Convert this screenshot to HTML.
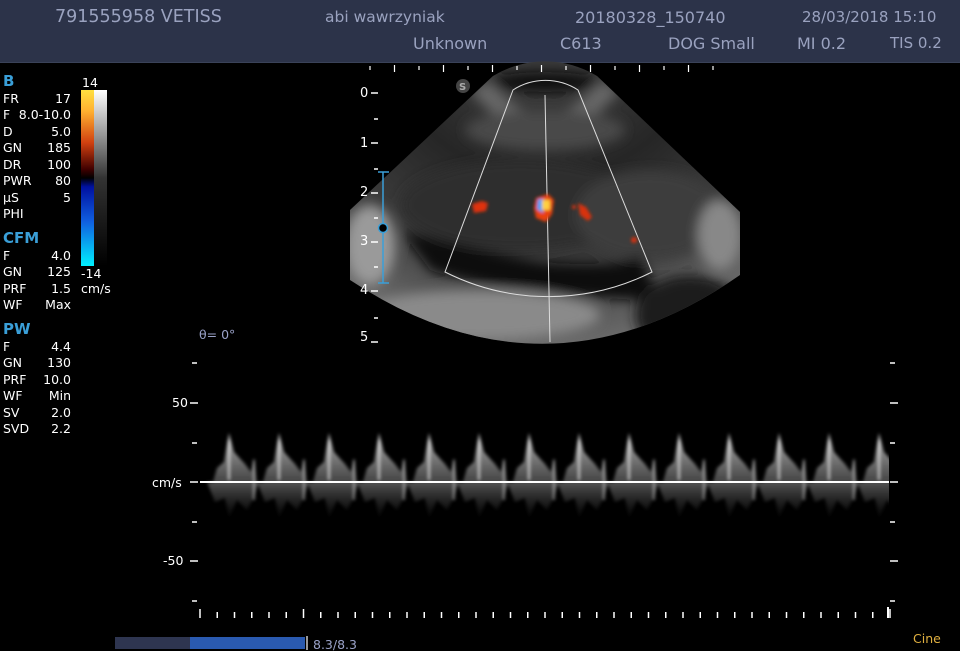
<!DOCTYPE html>
<html><head><meta charset="utf-8"><style>
*{margin:0;padding:0}
body{width:960px;height:651px;background:#000;overflow:hidden;position:relative;font-family:"DejaVu Sans","Liberation Sans",sans-serif;color:#fff}
.hdr{position:absolute;left:0;top:0;width:960px;height:62px;background:#2c3349;border-bottom:1px solid #3a4258}
.h{position:absolute;font-size:16px;color:#9aa2bf;white-space:nowrap}
.t{position:absolute;font-size:12.5px;line-height:16.4px;white-space:nowrap}
.lbl{color:#3a9fd8;font-weight:bold;font-size:15px}
.row{position:absolute;left:3px;width:68px;font-size:12.5px;height:16px}
.row span:last-child{position:absolute;right:0}
svg{position:absolute;left:0;top:0}
</style></head><body>
<div class="hdr"></div>
<div class="h" style="left:55px;top:7px;font-size:17.5px">791555958 VETISS</div>
<div class="h" style="left:325px;top:8px;font-size:15.5px">abi wawrzyniak</div>
<div class="h" style="left:575px;top:8px">20180328_150740</div>
<div class="h" style="left:802px;top:8px;font-size:15px">28/03/2018 15:10</div>
<div class="h" style="left:413px;top:34px">Unknown</div>
<div class="h" style="left:560px;top:34px">C613</div>
<div class="h" style="left:668px;top:34px">DOG Small</div>
<div class="h" style="left:797px;top:34px">MI 0.2</div>
<div class="h" style="left:890px;top:34px;font-size:15px">TIS 0.2</div>

<svg width="960" height="651">
<defs>
<linearGradient id="cb" x1="0" y1="0" x2="0" y2="1">
<stop offset="0" stop-color="#ffe040"/><stop offset="0.12" stop-color="#ffb030"/><stop offset="0.3" stop-color="#d04010"/><stop offset="0.45" stop-color="#400000"/><stop offset="0.5" stop-color="#000"/><stop offset="0.55" stop-color="#0010a0"/><stop offset="0.75" stop-color="#1060e0"/><stop offset="1" stop-color="#00f0ff"/></linearGradient>
<linearGradient id="gb" x1="0" y1="0" x2="0" y2="1"><stop offset="0" stop-color="#fff"/><stop offset="0.5" stop-color="#333"/><stop offset="1" stop-color="#000"/></linearGradient>
<radialGradient id="fan" cx="545" cy="10" r="335" gradientUnits="userSpaceOnUse">
<stop offset="0.25" stop-color="#3a3a3a"/><stop offset="0.5" stop-color="#262626"/><stop offset="0.75" stop-color="#3a3a3a"/><stop offset="1" stop-color="#6a6a6a"/></radialGradient>
<linearGradient id="up" x1="0" y1="0" x2="0" y2="1"><stop offset="0" stop-color="#ddd" stop-opacity="0.85"/><stop offset="1" stop-color="#aaa" stop-opacity="0.4"/></linearGradient>
<linearGradient id="dn" x1="0" y1="0" x2="0" y2="1"><stop offset="0" stop-color="#aaa" stop-opacity="0.5"/><stop offset="1" stop-color="#555" stop-opacity="0.05"/></linearGradient>
<clipPath id="fc"><path d="M493,76 A100,100 0 0 1 597,76 L740,212 L740,275 Q547,410 350,280 L350,210 Z"/></clipPath>
<clipPath id="dc"><rect x="200" y="340" width="689" height="270"/></clipPath>
<filter id="bl"><feGaussianBlur stdDeviation="6"/></filter>
<filter id="bl2"><feGaussianBlur stdDeviation="1.5"/></filter>
</defs>
<rect x="81" y="90" width="13" height="176" fill="url(#cb)"/>
<rect x="94" y="90" width="13" height="176" fill="url(#gb)"/>
<g clip-path="url(#fc)">
<rect x="350" y="60" width="390" height="290" fill="url(#fan)"/>
<g filter="url(#bl)">
<path d="M470,90 Q545,180 620,90 L600,80 Q545,150 490,80Z" fill="#666"/>
<ellipse cx="545" cy="130" rx="80" ry="20" fill="#4a4a4a"/>
<ellipse cx="520" cy="205" rx="120" ry="45" fill="#2e2e2e"/>
<ellipse cx="650" cy="215" rx="75" ry="45" fill="#3e3e3e"/>
<path d="M400,230 Q480,250 540,262 Q620,268 640,255 L660,300 Q600,300 540,292 Q460,282 430,270 Z" fill="#080808"/>
<ellipse cx="690" cy="315" rx="55" ry="40" fill="#1a1a1a"/>
<ellipse cx="480" cy="315" rx="120" ry="25" fill="#8a8a8a"/>
<ellipse cx="370" cy="245" rx="25" ry="40" fill="#9a9a9a"/>
<ellipse cx="720" cy="235" rx="22" ry="35" fill="#888"/>
<ellipse cx="545" cy="82" rx="55" ry="10" fill="#0a0a0a"/>
</g>
</g>
<path d="M513,90 L445,272 A230,230 0 0 0 652,272 L578,90 A60,60 0 0 0 513,90 Z" fill="none" stroke="#ddd" stroke-width="1"/>
<line x1="545" y1="95" x2="550" y2="342" stroke="#ddd" stroke-width="1"/>
<g filter="url(#bl2)">
<path d="M472,204 l10,-3 6,2 -2,8 -12,2z" fill="#e03010"/>
<path d="M536,198 l12,-4 6,6 -2,14 -6,8 -10,-4 -2,-10z" fill="#e84010"/>
<path d="M538,199 l6,0 -1,14 -6,-4z" fill="#30a0ff"/>
<path d="M542,200 l8,0 0,10 -8,0z" fill="#ffd040"/>
<path d="M578,203 l8,4 6,10 -4,4 -8,-6z" fill="#d83010"/>
<circle cx="574" cy="207" r="2" fill="#d83010"/>
<circle cx="634" cy="240" r="3" fill="#d83010"/>
</g>
<circle cx="463" cy="86" r="7" fill="#444"/><text x="459" y="90" font-size="10" fill="#aaa" font-weight="bold">S</text>
<g fill="#fff" font-size="13">
<text x="360" y="97">0</text><text x="360" y="147">1</text><text x="360" y="196">2</text><text x="360" y="245">3</text><text x="360" y="294">4</text><text x="360" y="341">5</text>
</g>
<g stroke="#fff" stroke-width="1.5">
<line x1="371" y1="93" x2="378" y2="93"/><line x1="374" y1="119" x2="378" y2="119"/>
<line x1="371" y1="143" x2="378" y2="143"/><line x1="374" y1="169" x2="378" y2="169"/>
<line x1="371" y1="193" x2="378" y2="193"/><line x1="374" y1="218" x2="378" y2="218"/>
<line x1="371" y1="242" x2="378" y2="242"/><line x1="374" y1="267" x2="378" y2="267"/>
<line x1="371" y1="291" x2="378" y2="291"/><line x1="374" y1="318" x2="378" y2="318"/>
<line x1="371" y1="342" x2="378" y2="342"/>
</g>
<g stroke="#3a9fd8" stroke-width="1.5" fill="none">
<line x1="383" y1="172" x2="383" y2="283"/><line x1="378" y1="172" x2="389" y2="172"/><line x1="378" y1="283" x2="389" y2="283"/><circle cx="383" cy="228" r="4.5" fill="#000"/></g>
<g id="top" stroke="#fff" stroke-width="1.2"></g>
<text x="199" y="339" font-size="12.5" fill="#9aa2c8">θ= 0°</text>
<g fill="#fff" font-size="12.5"><text x="172" y="407">50</text><text x="152" y="487">cm/s</text><text x="163" y="565">-50</text></g>
<g stroke="#fff" stroke-width="1.5">
<line x1="192" y1="363" x2="197" y2="363"/><line x1="190" y1="403" x2="198" y2="403"/><line x1="192" y1="443" x2="197" y2="443"/>
<line x1="190" y1="482" x2="198" y2="482"/><line x1="192" y1="522" x2="197" y2="522"/><line x1="190" y1="561" x2="198" y2="561"/><line x1="192" y1="601" x2="197" y2="601"/>
<line x1="890" y1="363" x2="895" y2="363"/><line x1="890" y1="403" x2="898" y2="403"/><line x1="890" y1="443" x2="895" y2="443"/>
<line x1="890" y1="482" x2="898" y2="482"/><line x1="890" y1="522" x2="895" y2="522"/><line x1="890" y1="561" x2="898" y2="561"/><line x1="890" y1="601" x2="895" y2="601"/>
</g>
<g clip-path="url(#dc)"><g id="beats" filter="url(#bl2)"></g></g>
<line x1="200" y1="482" x2="889" y2="482" stroke="#fff" stroke-width="2"/>
<g id="bt" stroke="#fff" stroke-width="1.5"></g>
<rect x="115" y="637" width="76" height="12" fill="#2e3550"/>
<rect x="190" y="637" width="115" height="12" fill="#2a5ab0"/>
<line x1="307" y1="636" x2="307" y2="650" stroke="#ccc" stroke-width="1.5"/>
<text x="313" y="649" font-size="12.5" fill="#9aa2c8">8.3/8.3</text>
<text x="913" y="643" font-size="12.5" fill="#e0b040">Cine</text>
</svg>

<div class="t lbl" style="left:3px;top:73px">B</div>
<div class="t" style="left:82px;top:75px">14</div>
<div class="row" style="top:91px"><span>FR</span><span>17</span></div>
<div class="row" style="top:107px"><span>F</span><span>8.0-10.0</span></div>
<div class="row" style="top:124px"><span>D</span><span>5.0</span></div>
<div class="row" style="top:140px"><span>GN</span><span>185</span></div>
<div class="row" style="top:157px"><span>DR</span><span>100</span></div>
<div class="row" style="top:173px"><span>PWR</span><span>80</span></div>
<div class="row" style="top:190px"><span>µS</span><span>5</span></div>
<div class="row" style="top:206px"><span>PHI</span><span></span></div>
<div class="t lbl" style="left:3px;top:230px">CFM</div>
<div class="row" style="top:248px"><span>F</span><span>4.0</span></div>
<div class="row" style="top:264px"><span>GN</span><span>125</span></div>
<div class="row" style="top:281px"><span>PRF</span><span>1.5</span></div>
<div class="row" style="top:297px"><span>WF</span><span>Max</span></div>
<div class="t" style="left:81px;top:266px">-14</div>
<div class="t" style="left:81px;top:281px">cm/s</div>
<div class="t lbl" style="left:3px;top:321px">PW</div>
<div class="row" style="top:339px"><span>F</span><span>4.4</span></div>
<div class="row" style="top:355px"><span>GN</span><span>130</span></div>
<div class="row" style="top:372px"><span>PRF</span><span>10.0</span></div>
<div class="row" style="top:388px"><span>WF</span><span>Min</span></div>
<div class="row" style="top:405px"><span>SV</span><span>2.0</span></div>
<div class="row" style="top:421px"><span>SVD</span><span>2.2</span></div>
<script>
var ns="http://www.w3.org/2000/svg";
function el(p,t,a){var e=document.createElementNS(ns,t);for(var k in a)e.setAttribute(k,a[k]);p.appendChild(e);return e;}
var b=document.getElementById("beats");
for(var i=0;i<14;i++){var x=229+i*50;
el(b,"path",{d:"M"+(x-16)+",482 L"+(x-12)+",468 L"+(x-5)+",462 L"+x+",433 L"+(x+5)+",452 L"+(x+16)+",464 L"+(x+22)+",472 L"+(x+25)+",458 L"+(x+28)+",482 Z",fill:"url(#up)"});
el(b,"path",{d:"M"+(x-22)+",482 L"+(x-14)+",502 L"+(x-4)+",498 L"+x+",518 L"+(x+8)+",500 L"+(x+18)+",510 L"+(x+26)+",495 L"+(x+30)+",482 Z",fill:"url(#dn)"});
el(b,"line",{x1:x,y1:440,x2:x,y2:480,stroke:"#fff","stroke-width":"2",opacity:"0.7"});
el(b,"line",{x1:x+25,y1:460,x2:x+25,y2:500,stroke:"#fff","stroke-width":"1.5",opacity:"0.6"});}
var bt=document.getElementById("bt");
for(var x=200;x<=890;x+=17.25){var big=(Math.abs(x-200)<1||Math.abs(x-303.5)<2||Math.abs(x-889)<3);el(bt,"line",{x1:x,y1:big?609:612,x2:x,y2:618});}
el(bt,"line",{x1:888,y1:607,x2:888,y2:618,"stroke-width":"2"});
var tp=document.getElementById("top");
for(var x=370;x<=720;x+=24.5){var big=Math.round((x-370)/24.5)%2==1;el(tp,"line",{x1:x,y1:big?65:66,x2:x,y2:big?72:70});}
</script>
</body></html>
